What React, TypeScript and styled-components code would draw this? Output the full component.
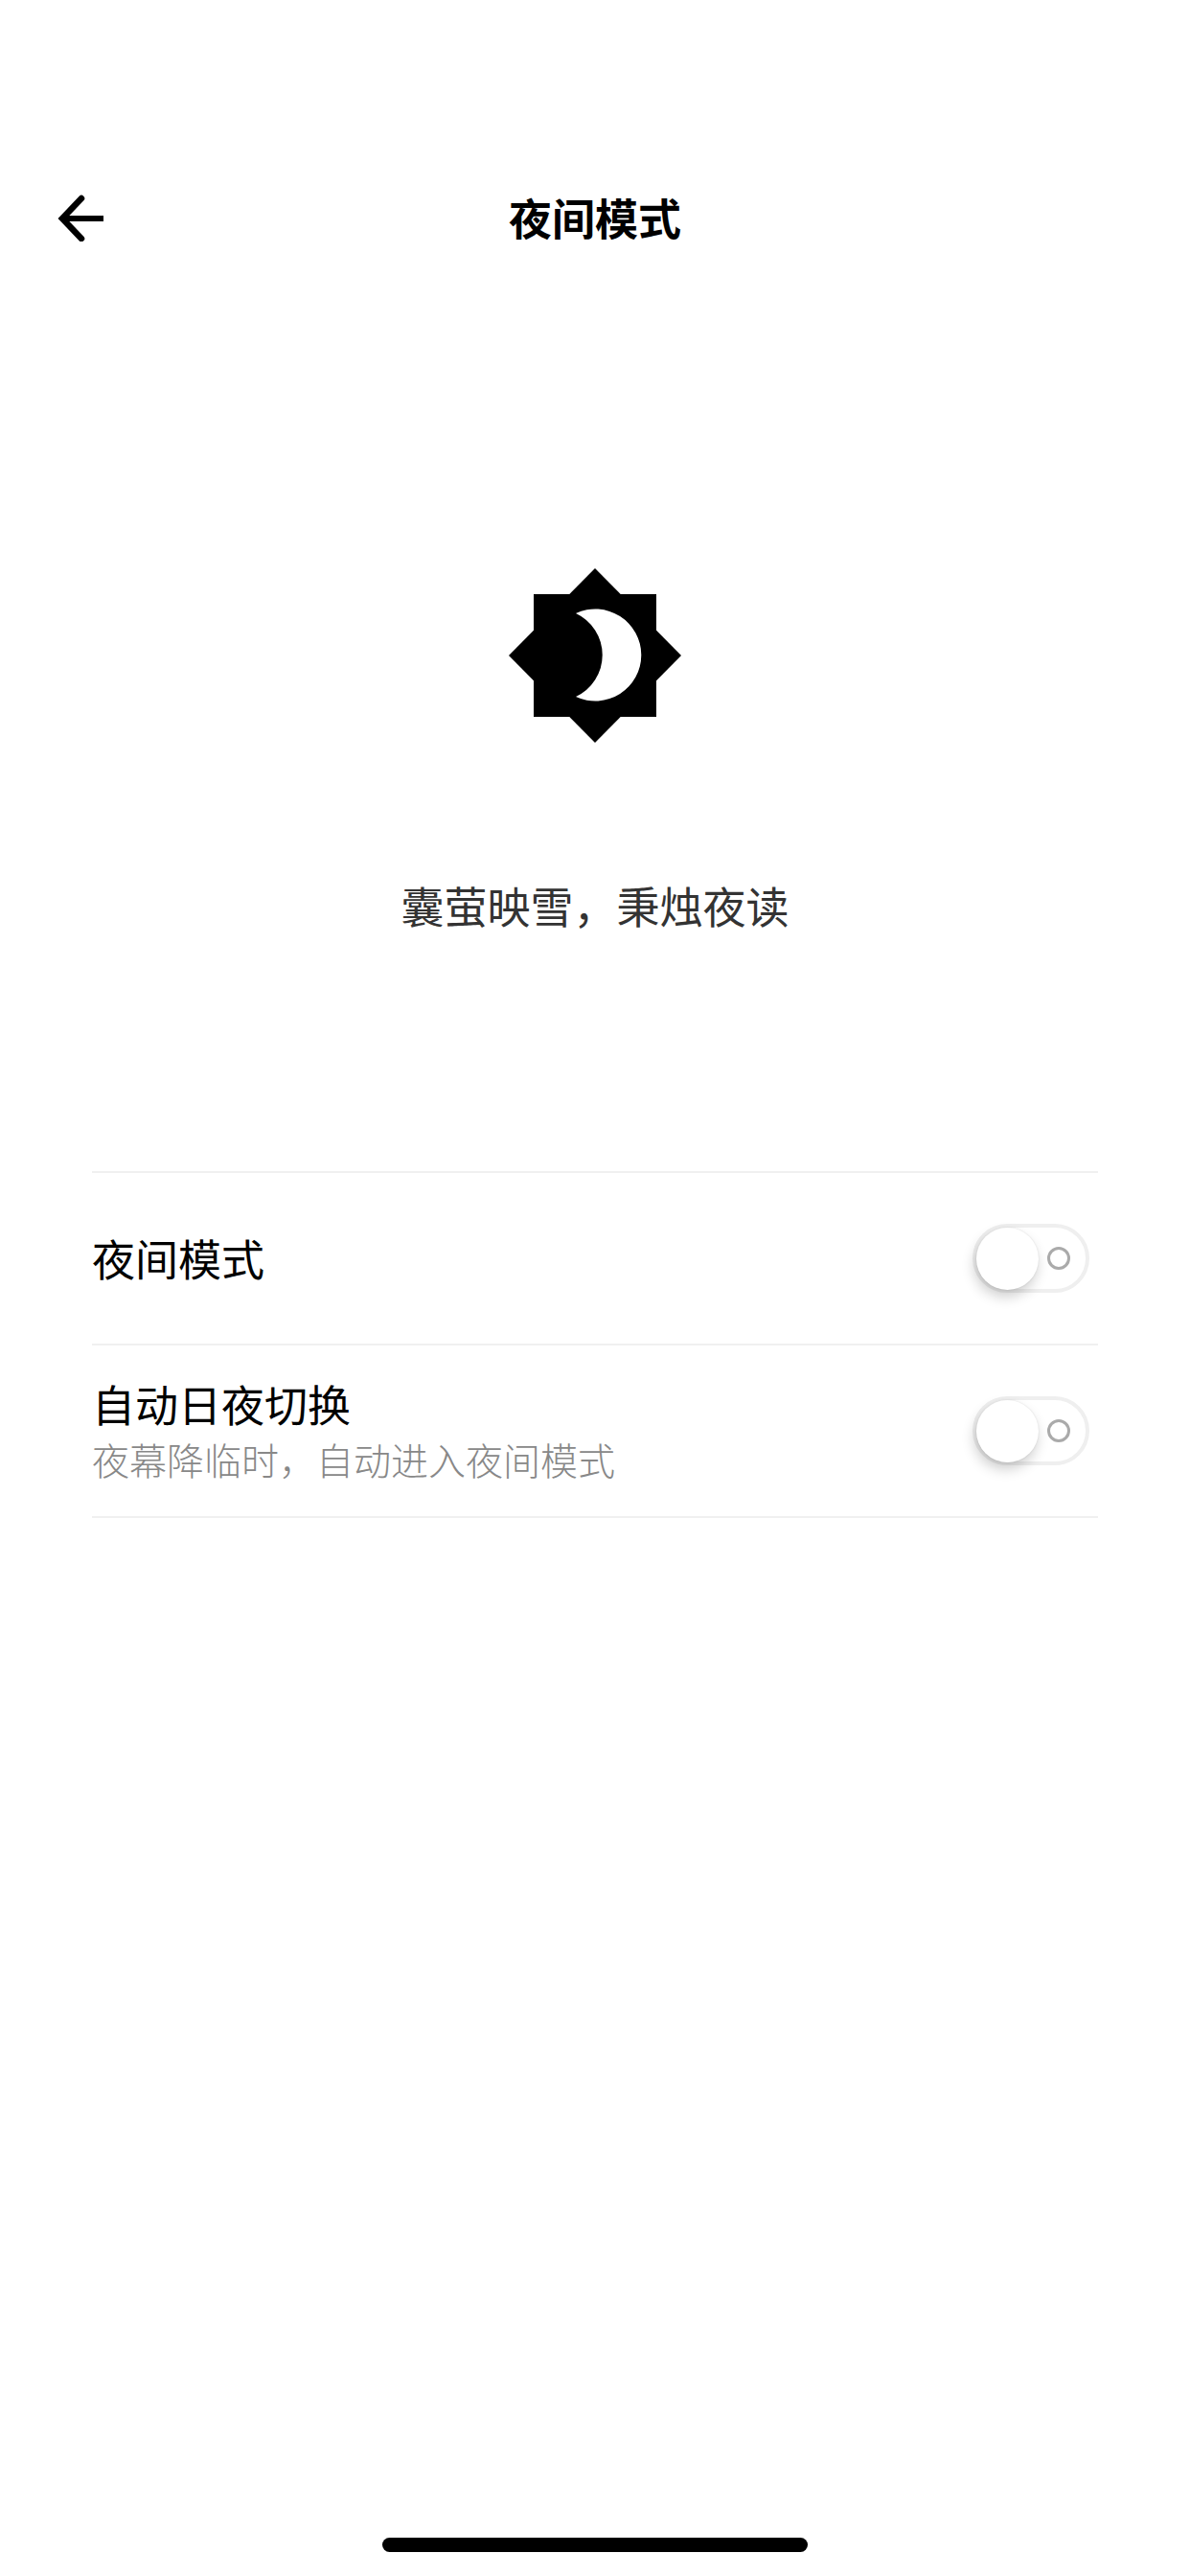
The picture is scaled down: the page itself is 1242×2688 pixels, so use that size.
import React from 'react';
import styled, { createGlobalStyle } from 'styled-components';

const GlobalStyle = createGlobalStyle`
  html, body {
    margin: 0;
    padding: 0;
    background: #fff;
  }
  body {
    font-family: "Noto Sans CJK SC", "Noto Sans", sans-serif;
  }
`;

const Page = styled.div`
  display: flex;
  flex-direction: column;
  width: 1242px;
  height: 2688px;
  overflow: hidden;
  background: #fff;
`;

const Header = styled.header`
  display: grid;
  grid-template-columns: 1fr auto 1fr;
  align-items: center;
  height: 88px;
  margin-top: 183px;
  padding: 0 60px;
`;

const BackButton = styled.button`
  display: flex;
  width: 50px;
  height: 50px;
  padding: 0;
  border: 0;
  background: none;
`;

const Title = styled.h1`
  margin: 0;
  font-size: 45px;
  font-weight: 700;
  line-height: 60px;
  color: #000;
`;

const Hero = styled.section`
  display: flex;
  flex-direction: column;
  align-items: center;
  margin-top: 322px;
`;

const Tagline = styled.p`
  margin: 140px 0 0;
  font-size: 45px;
  line-height: 60px;
  color: #333;
`;

const SettingsList = styled.div`
  margin: 247px 96px 0;
  border-bottom: 2px solid #f0f0f0;
`;

const Row = styled.div`
  display: flex;
  align-items: center;
  justify-content: space-between;
  box-sizing: border-box;
  height: 180px;
  padding: 0 9px 0 0;
  border-top: 2px solid #f0f0f0;
`;

const RowText = styled.div`
  display: flex;
  flex-direction: column;
`;

const RowLabel = styled.span`
  font-size: 45px;
  line-height: 58px;
  color: #000;
`;

const RowHint = styled.span`
  font-size: 39px;
  font-weight: 300;
  line-height: 56px;
  color: #888;
`;

const Track = styled.div`
  display: flex;
  align-items: center;
  justify-content: space-between;
  box-sizing: border-box;
  width: 122px;
  height: 72px;
  padding-right: 16px;
  border: 4px solid #efefef;
  border-radius: 36px;
  background: #fff;
`;

const Knob = styled.div`
  flex: none;
  width: 65px;
  height: 65px;
  border-radius: 50%;
  background: #fff;
  box-shadow: -2px 7px 14px rgba(0, 0, 0, 0.2), 0 0 2px rgba(0, 0, 0, 0.12);
`;

const OffMark = styled.div`
  flex: none;
  box-sizing: border-box;
  width: 24px;
  height: 24px;
  border: 3px solid #aaa;
  border-radius: 50%;
`;

const HomeIndicator = styled.div`
  flex: none;
  align-self: center;
  width: 444px;
  height: 15px;
  margin-top: auto;
  margin-bottom: 25px;
  border-radius: 8px;
  background: #000;
`;

const BackArrow = () => (
  <svg width="50" height="50" viewBox="0 0 50 50" fill="none">
    <path d="M48 26H6" stroke="#000" strokeWidth="6" />
    <path d="M25 5L5 26L25 47" stroke="#000" strokeWidth="6.5" strokeLinecap="round" strokeMiterlimit="4" />
  </svg>
);

// Eight-point sun with a crescent cut out of its middle
const NightIcon = () => (
  <svg width="180" height="182" viewBox="0 0 180 182">
    <rect x="26" y="27" width="128" height="128" fill="#000" />
    <polygon points="90,0 180,91 90,182 0,91" fill="#000" />
    <path d="M70 47A48 48 0 1 1 70 134A48 48 0 0 0 70 47Z" fill="#fff" />
  </svg>
);

const Toggle = () => (
  <Track>
    <Knob />
    <OffMark />
  </Track>
);

export default function App() {
  return (
    <Page>
      <GlobalStyle />
      <Header>
        <BackButton>
          <BackArrow />
        </BackButton>
        <Title>夜间模式</Title>
      </Header>
      <Hero>
        <NightIcon />
        <Tagline>囊萤映雪，秉烛夜读</Tagline>
      </Hero>
      <SettingsList>
        <Row>
          <RowText>
            <RowLabel>夜间模式</RowLabel>
          </RowText>
          <Toggle />
        </Row>
        <Row>
          <RowText>
            <RowLabel>自动日夜切换</RowLabel>
            <RowHint>夜幕降临时，自动进入夜间模式</RowHint>
          </RowText>
          <Toggle />
        </Row>
      </SettingsList>
      <HomeIndicator />
    </Page>
  );
}
